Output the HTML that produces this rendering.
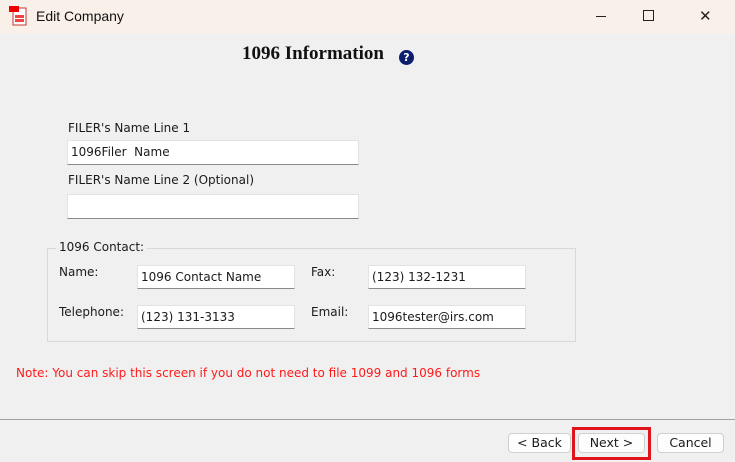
<!DOCTYPE html>
<html><head><style>
body{margin:0;width:735px;height:462px;background:#f0f0f0;font-family:"DejaVu Sans",sans-serif;font-size:12px;color:#1a1a1a;position:relative;overflow:hidden}
.a{position:absolute}
.tb{left:0;top:0;width:735px;height:34px;background:#f9f1e9}
.in{position:absolute;background:#fff;border:1px solid #e3e3e3;border-bottom:1px solid #8a8a8a;box-sizing:border-box;padding:4px 0 0 3px;font-size:12px}
.btn{position:absolute;background:#fdfdfd;border:1px solid #cfcfcf;border-radius:4px;box-sizing:border-box;text-align:center;line-height:18px;font-size:12.5px}
</style></head><body>
<div class="a tb"></div>
<svg class="a" style="left:9px;top:6px" width="20" height="20"><rect x="4" y="2" width="13" height="17" fill="#fff" stroke="#c33"/><rect x="6" y="9" width="9" height="3" fill="#e44"/><rect x="6" y="13" width="9" height="3" fill="#e44"/><rect x="0" y="0" width="10" height="6" fill="#e00"/></svg>
<div class="a" style="left:36px;top:8px;font-size:14px;color:#111;font-family:'Liberation Sans',sans-serif">Edit Company</div>
<div class="a" style="left:596px;top:16px;width:10px;height:1px;background:#222"></div>
<div class="a" style="left:643px;top:10px;width:9px;height:9px;border:1px solid #222"></div>
<div class="a" style="left:699px;top:7px;font-size:15px;color:#222;font-family:'Liberation Sans',sans-serif">✕</div>
<div class="a" style="left:242px;top:43px;font-family:'Liberation Serif',serif;font-weight:bold;font-size:19px;color:#111">1096 Information</div>
<div class="a" style="left:399px;top:50px;width:15px;height:15px;border-radius:50%;background:#0d1e6e;color:#fff;font-size:11px;font-weight:bold;text-align:center;line-height:15px">?</div>
<div class="a" style="left:68px;top:121px">FILER's Name Line 1</div>
<div class="in" style="left:67px;top:140px;width:292px;height:25px">1096Filer&nbsp; Name</div>
<div class="a" style="left:68px;top:173px">FILER's Name Line 2 (Optional)</div>
<div class="in" style="left:67px;top:194px;width:292px;height:25px"></div>
<div class="a" style="left:47px;top:248px;width:529px;height:94px;border:1px solid #d8d8d8;box-sizing:border-box"></div>
<div class="a" style="left:56px;top:240px;background:#f0f0f0;padding:0 3px">1096 Contact:</div>
<div class="a" style="left:59px;top:265px">Name:</div>
<div class="in" style="left:137px;top:265px;width:158px;height:24px">1096 Contact Name</div>
<div class="a" style="left:59px;top:305px">Telephone:</div>
<div class="in" style="left:137px;top:305px;width:158px;height:24px">(123) 131-3133</div>
<div class="a" style="left:311px;top:265px">Fax:</div>
<div class="in" style="left:368px;top:265px;width:158px;height:24px">(123) 132-1231</div>
<div class="a" style="left:311px;top:305px">Email:</div>
<div class="in" style="left:368px;top:305px;width:158px;height:24px">1096tester@irs.com</div>
<div class="a" style="left:16px;top:366px;color:#ff1a1a;font-size:12px">Note: You can skip this screen if you do not need to file 1099 and 1096 forms</div>
<div class="a" style="left:0;top:419px;width:735px;height:1px;background:#a0a0a0"></div>
<div class="btn" style="left:508px;top:433px;width:63px;height:20px">&lt; Back</div>
<div class="a" style="left:572px;top:427px;width:79px;height:33px;border:3px solid #e0151b;box-sizing:border-box"></div>
<div class="btn" style="left:578px;top:433px;width:67px;height:20px">Next &gt;</div>
<div class="btn" style="left:657px;top:433px;width:67px;height:20px">Cancel</div>
</body></html>
